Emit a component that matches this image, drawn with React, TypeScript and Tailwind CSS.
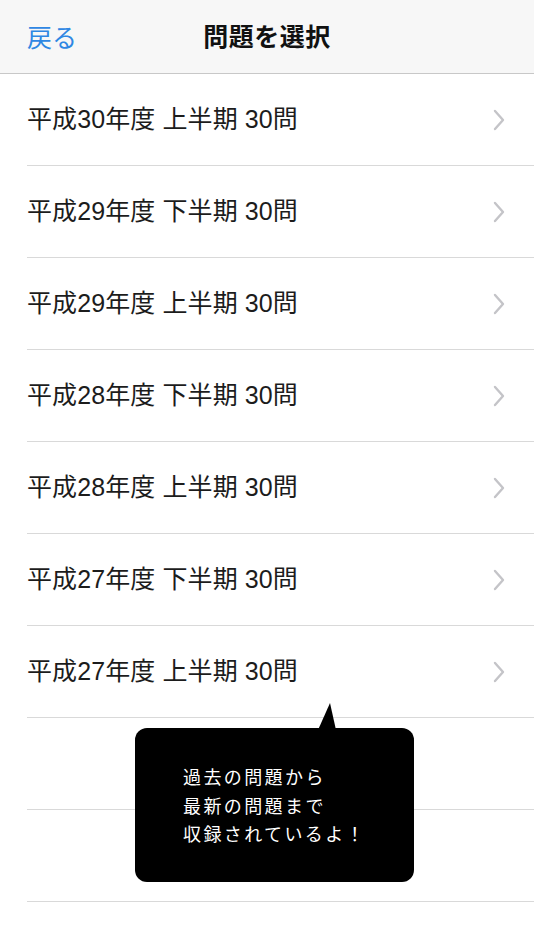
import React from "react";

const items = [
  "平成30年度 上半期 30問",
  "平成29年度 下半期 30問",
  "平成29年度 上半期 30問",
  "平成28年度 下半期 30問",
  "平成28年度 上半期 30問",
  "平成27年度 下半期 30問",
  "平成27年度 上半期 30問",
];

const font = { fontFamily: '"Noto Sans CJK JP", "Noto Sans", sans-serif' };
const rowFont = { fontFamily: '"Liberation Sans", "Noto Sans CJK JP", sans-serif' };

function Chevron() {
  return (
    <svg width="14" height="22" viewBox="0 0 14 22" className="shrink-0">
      <path d="M3 2 L11 11 L3 20" fill="none" stroke="#c4c4c8" strokeWidth="2.4" strokeLinecap="round" strokeLinejoin="round" />
    </svg>
  );
}

export default function App() {
  return (
    <div className="relative w-[534px] h-[950px] bg-white overflow-hidden" style={font}>
      <header className="h-[74px] bg-[#f7f7f7] border-b border-[#c8c8c8] flex items-center relative">
        <span className="absolute left-[27px] top-[19px] text-[25px] leading-[34px] text-[#2f87e3]">戻る</span>
        <h1 className="w-full text-center text-[25px] leading-[34px] font-bold text-[#111] tracking-[0.5px] -mt-[3px]">問題を選択</h1>
      </header>
      <ul>
        {items.map((t) => (
          <li key={t} className="pl-[27px]">
            <div className="h-[92px] border-b border-[#d9d9d9] flex items-center justify-between pr-[28px]">
              <span className="text-[25px] leading-[30px] text-[#1c1c1c] -mt-[2px] tracking-[0.1px]" style={rowFont}>{t}</span>
              <Chevron />
            </div>
          </li>
        ))}
        <li className="pl-[27px]">
          <div className="h-[92px] border-b border-[#d9d9d9]" />
        </li>
        <li className="pl-[27px]">
          <div className="h-[92px] border-b border-[#d9d9d9]" />
        </li>
      </ul>

      <div className="absolute left-[135px] top-[703px] w-[279px]">
        <svg width="24" height="28" viewBox="0 0 24 28" className="absolute left-[181px] top-0">
          <path d="M2 27 L14 0 L20 27 Z" fill="#000" />
        </svg>
        <div className="absolute left-0 top-[25px] w-[279px] h-[154px] bg-black rounded-[12px] pl-[48px] pt-[34px]">
          <p className="text-white text-[18px] leading-[28.5px] tracking-[2.4px]">
            過去の問題から
            <br />
            最新の問題まで
            <br />
            収録されているよ！
          </p>
        </div>
      </div>
    </div>
  );
}
